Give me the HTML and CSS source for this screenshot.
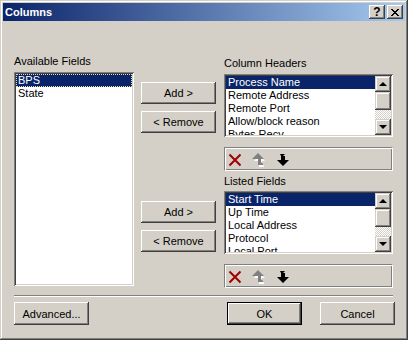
FILE: index.html
```html
<!DOCTYPE html>
<html>
<head>
<meta charset="utf-8">
<link rel="stylesheet" href="styles.css">
</head>
<body>
<div class="window">
  <div class="titlebar">
    <span class="title">Columns</span>
    <div class="tbtns">
      <div class="tbtn help">?</div>
      <div class="tbtn close">
        <svg width="8" height="7" viewBox="0 0 8 7"><path d="M0 0h2v1h1v1h2v-1h1v-1h2v1h-1v1h-1v1h-1v1h1v1h1v1h1v1h-2v-1h-1v-1h-2v1h-1v1h-2v-1h1v-1h1v-1h1v-1h-1v-1h-1v-1h-1z" fill="#000"/></svg>
      </div>
    </div>
  </div>
  <div class="content">
    <div class="col-left">
      <div class="label">Available Fields</div>
      <div class="listbox tall">
        <div class="items">
          <div class="row sel focus">BPS</div>
          <div class="row">State</div>
        </div>
      </div>
    </div>
    <div class="col-mid">
      <div class="btn">Add &gt;</div>
      <div class="btn gap">&lt; Remove</div>
      <div class="btn second">Add &gt;</div>
      <div class="btn gap">&lt; Remove</div>
    </div>
    <div class="col-right">
      <div class="label">Column Headers</div>
      <div class="listbox short">
        <div class="items">
          <div class="row sel">Process Name</div>
          <div class="row">Remote Address</div>
          <div class="row">Remote Port</div>
          <div class="row">Allow/block reason</div>
          <div class="row">Bytes Recv</div>
        </div>
        <div class="vscroll">
          <div class="sbtn up"></div>
          <div class="thumb"></div>
          <div class="track"></div>
          <div class="sbtn down"></div>
        </div>
      </div>
      <div class="tbox">
        <svg class="ico" width="14" height="14" viewBox="0 0 14 14"><path d="M1.5 1.5L12.5 12.5M12.5 1.5L1.5 12.5" stroke="#a00000" stroke-width="2" fill="none"/></svg>
        <svg class="ico" width="14" height="14" viewBox="0 0 14 14"><path d="M6 1L12 7L9 7L9 10L11 12L11 13L6 13L6 7L1 7Z" fill="#fff" transform="translate(1,1)"/><path d="M6 0L12 6L9 6L9 9L11 11L11 12L6 12L6 6L0 6Z" fill="#808080"/></svg>
        <svg class="ico" width="14" height="14" viewBox="0 0 14 14"><path d="M3 1L8 1L8 1L6 3L6 3L6 3L8 3L8 7L12 7L6 13L0 7L4 7L4 3Z" fill="#000" transform="translate(1,0)"/></svg>
      </div>
      <div class="label listed">Listed Fields</div>
      <div class="listbox short l2">
        <div class="items">
          <div class="row sel">Start Time</div>
          <div class="row">Up Time</div>
          <div class="row">Local Address</div>
          <div class="row">Protocol</div>
          <div class="row">Local Port</div>
        </div>
        <div class="vscroll">
          <div class="sbtn up"></div>
          <div class="thumb"></div>
          <div class="track"></div>
          <div class="sbtn down"></div>
        </div>
      </div>
      <div class="tbox">
        <svg class="ico" width="14" height="14" viewBox="0 0 14 14"><path d="M1.5 1.5L12.5 12.5M12.5 1.5L1.5 12.5" stroke="#a00000" stroke-width="2" fill="none"/></svg>
        <svg class="ico" width="14" height="14" viewBox="0 0 14 14"><path d="M6 1L12 7L9 7L9 10L11 12L11 13L6 13L6 7L1 7Z" fill="#fff" transform="translate(1,1)"/><path d="M6 0L12 6L9 6L9 9L11 11L11 12L6 12L6 6L0 6Z" fill="#808080"/></svg>
        <svg class="ico" width="14" height="14" viewBox="0 0 14 14"><path d="M3 1L8 1L8 1L6 3L6 3L6 3L8 3L8 7L12 7L6 13L0 7L4 7L4 3Z" fill="#000" transform="translate(1,0)"/></svg>
      </div>
    </div>
  </div>
  <div class="sep"></div>
  <div class="footer">
    <div class="btn fbtn">Advanced...</div>
    <div class="spacer"></div>
    <div class="btn fbtn default">OK</div>
    <div class="btn fbtn cancel">Cancel</div>
  </div>
</div>
</body>
</html>
```

FILE: styles.css
```css
* { box-sizing: border-box; }
html, body { margin: 0; padding: 0; }
body {
  width: 408px;
  height: 340px;
  background: #d4d0c8;
  font-family: "Liberation Sans", Arial, sans-serif;
  font-size: 11px;
  color: #000;
  overflow: hidden;
}
.window {
  width: 408px;
  height: 340px;
  background: #d4d0c8;
  padding: 3px;
  box-shadow: inset -1px -1px #404040, inset 1px 1px #d4d0c8, inset -2px -2px #808080, inset 2px 2px #fff;
  display: flex;
  flex-direction: column;
}
.titlebar {
  height: 18px;
  background: linear-gradient(to right, #0a246a, #a6caf0);
  display: flex;
  padding: 0 2px;
}
.title {
  flex: 1;
  color: #fff;
  font-weight: bold;
  line-height: 18px;
  font-size: 11px;
}
.tbtns {
  display: flex;
  gap: 2px;
  margin-top: 2px;
}
.tbtn {
  width: 16px;
  height: 14px;
  background: #d4d0c8;
  box-shadow: inset -1px -1px #404040, inset 1px 1px #fff, inset -2px -2px #808080, inset 2px 2px #d4d0c8;
  display: flex;
  align-items: center;
  justify-content: center;
  font-weight: bold;
  font-size: 12px;
  line-height: 14px;
}
.tbtn.help { padding-bottom: 1px; }
.content {
  display: flex;
  align-items: flex-start;
  padding-left: 11px;
}
.col-left {
  width: 120px;
  padding-top: 34px;
}
.col-mid {
  width: 75px;
  margin-left: 7px;
  padding-top: 61px;
  display: flex;
  flex-direction: column;
}
.col-right {
  width: 169px;
  margin-left: 8px;
  padding-top: 36px;
}
.label {
  height: 13px;
  line-height: 13px;
  margin-bottom: 4px;
  white-space: nowrap;
}
.label.listed { margin-top: 4px; margin-bottom: 3px; }
.listbox {
  background: #fff;
  padding: 2px;
  box-shadow: inset 1px 1px #808080, inset -1px -1px #fff, inset 2px 2px #404040, inset -2px -2px #d4d0c8;
  display: flex;
}
.listbox.tall { height: 214px; }
.listbox.short { height: 63px; }
.items {
  flex: 1;
  overflow: hidden;
  min-width: 0;
}
.row {
  height: 13px;
  line-height: 13px;
  padding-left: 2px;
  white-space: nowrap;
}
.row.sel {
  background: #0a246a;
  color: #fff;
}
.row.focus {
  outline: 1px dotted #e8dca0;
  outline-offset: -1px;
}
.vscroll {
  width: 16px;
  display: flex;
  flex-direction: column;
}
.sbtn, .thumb {
  background: #d4d0c8;
  box-shadow: inset -1px -1px #404040, inset 1px 1px #d4d0c8, inset -2px -2px #808080, inset 2px 2px #fff;
}
.sbtn {
  height: 16px;
  position: relative;
}
.sbtn::after {
  content: "";
  position: absolute;
  left: 4px;
  width: 0;
  height: 0;
  border-left: 4px solid transparent;
  border-right: 4px solid transparent;
}
.sbtn.up::after { top: 6px; border-bottom: 4px solid #000; }
.sbtn.down::after { top: 6px; border-top: 4px solid #000; }
.thumb { height: 18px; }
.track {
  flex: 1;
  background-color: #fff;
  background-image: repeating-conic-gradient(#d4d0c8 0 25%, #fff 0 50%);
  background-size: 2px 2px;
}
.tbox {
  height: 24px;
  margin-top: 10px;
  border-top: 1px solid #808080;
  border-left: 1px solid #808080;
  border-right: 1px solid #fff;
  border-bottom: 1px solid #fff;
  box-shadow: inset 1px 1px #fff, inset -1px -1px #808080;
  display: flex;
  align-items: flex-start;
  padding: 5px 0 0 3px;
  gap: 10px;
}
.ico { display: block; }
.btn {
  height: 22px;
  background: #d4d0c8;
  box-shadow: inset -1px -1px #404040, inset 1px 1px #fff, inset -2px -2px #808080, inset 2px 2px #d4d0c8;
  display: flex;
  align-items: center;
  justify-content: center;
  white-space: nowrap;
}
.btn.gap { margin-top: 7px; }
.btn.second { margin-top: 68px; }
.sep {
  height: 2px;
  margin: 7px 12px 0 11px;
  border-top: 1px solid #808080;
  border-bottom: 1px solid #fff;
}
.footer {
  display: flex;
  margin-top: 5px;
  padding: 0 10px 0 11px;
}
.spacer { flex: 1; }
.fbtn {
  width: 75px;
  height: 23px;
}
.fbtn.default {
  border: 1px solid #000;
}
.fbtn.cancel { margin-left: 18px; }
```
